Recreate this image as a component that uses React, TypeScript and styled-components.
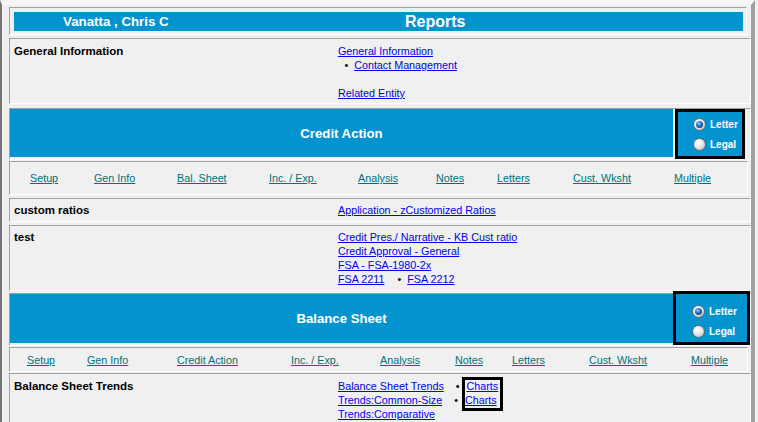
import React from "react";
import styled, { createGlobalStyle, css } from "styled-components";

const Global = createGlobalStyle`
  html, body { margin: 0; padding: 0; background: #f0f0f0; }
  body { font-family: "Liberation Sans", Arial, sans-serif; }
  #root { width: 758px; height: 422px; overflow: hidden; }
`;

const Frame = styled.div`
  box-sizing: border-box;
  width: 755px;
  height: 422px;
  overflow: hidden;
  border-left: 2px solid #747474;
  border-right: 4px solid #a0a0a0;
  border-top: 5px solid #f6f6f6;
  padding: 2px 0 0 7px;
`;

const boxBorder = css`
  border: 1px solid;
  border-color: #a0a0a0 #ffffff #ffffff #a0a0a0;
`;

const HeaderBox = styled.div`
  ${boxBorder};
  margin-right: 4px;
  padding: 4px 3px 3px 4px;
`;

const HeaderBar = styled.div`
  display: grid;
  grid-template-columns: 391px 1fr;
  align-items: center;
  height: 19px;
  background: #0394cf;
  color: #fff;
  font-weight: bold;
`;

const Name = styled.div`
  padding-left: 49px;
  font-size: 13.3px;
  line-height: 19px;
`;

const Title = styled.div`
  font-size: 16px;
  line-height: 19px;
`;

const Row = styled.div<{ $mt: number; $pt: number; $pb: number }>`
  ${boxBorder};
  position: relative;
  margin-top: ${(p) => p.$mt}px;
  padding: ${(p) => p.$pt}px 0 ${(p) => p.$pb}px 4px;
  display: grid;
  grid-template-columns: 324px 1fr;
  font-size: 10.75px;
  line-height: 14px;
`;

const Label = styled.div`
  font-weight: bold;
  font-size: 11.5px;
  color: #000;
`;

const Links = styled.div`
  position: relative;
  display: flex;
  flex-direction: column;
`;

const Line = styled.div<{ $indent?: number }>`
  height: 14px;
  white-space: nowrap;
  padding-left: ${(p) => p.$indent || 0}px;
  color: #000;
`;

const Link = styled.a`
  color: #0000f0;
  text-decoration: underline;
  cursor: pointer;
`;

const Bullet = styled.span<{ $l: number; $r: number }>`
  margin: 0 ${(p) => p.$r}px 0 ${(p) => p.$l}px;
  color: #000;
`;

const Section = styled.div<{ $mt: number }>`
  ${boxBorder};
  margin-top: ${(p) => p.$mt}px;
  display: flex;
  align-items: flex-start;
`;

const BlueTitle = styled.div<{ $h: number }>`
  width: 663px;
  height: ${(p) => p.$h}px;
  background: #0394cf;
  color: #fff;
  font-weight: bold;
  font-size: 13.2px;
  display: flex;
  align-items: center;
  justify-content: center;
`;

const RadioCell = styled.div<{ $w: number; $h: number; $ml: number; $mt: number; $pt: number; $pl: number }>`
  box-sizing: border-box;
  position: relative;
  width: ${(p) => p.$w}px;
  height: ${(p) => p.$h}px;
  margin-left: ${(p) => p.$ml}px;
  margin-top: ${(p) => p.$mt}px;
  padding: ${(p) => p.$pt}px 0 0 ${(p) => p.$pl}px;
  border: 3px solid #000;
  background: #0394cf;
  display: flex;
  flex-direction: column;
`;

const RadioRow = styled.label`
  display: flex;
  align-items: center;
  gap: 4px;
  height: 20px;
  color: #fff;
  font-weight: bold;
  font-size: 10px;
`;

const Radio = styled.span<{ $on?: boolean }>`
  position: relative;
  box-sizing: border-box;
  flex: none;
  width: 13px;
  height: 13px;
  border-radius: 50%;
  border: 1px solid #5f6f7c;
  background: radial-gradient(circle at 38% 32%, #ffffff 0%, #ececec 40%, #b0b0b0 100%);
  ${(p) =>
    p.$on &&
    css`
      &::after {
        content: "";
        position: absolute;
        left: 2px;
        top: 2px;
        width: 7px;
        height: 7px;
        border-radius: 50%;
        background: radial-gradient(circle at 40% 35%, #8fd2ff 0%, #1f6db8 45%, #082c55 100%);
      }
    `}
`;

const NavBox = styled.div<{ $mt: number; $pt: number; $pb: number; $pl: number; $cols: string }>`
  ${boxBorder};
  margin-top: ${(p) => p.$mt}px;
  margin-right: 3px;
  padding: ${(p) => p.$pt}px 0 ${(p) => p.$pb}px ${(p) => p.$pl}px;
  display: grid;
  grid-template-columns: ${(p) => p.$cols};
  font-size: 10.75px;
  line-height: 14px;
  white-space: nowrap;
`;

const NavLink = styled.a`
  color: #00707a;
  text-decoration: underline;
  cursor: pointer;
`;

const Highlight = styled.div`
  position: absolute;
  left: 124px;
  top: -2px;
  width: 41px;
  height: 34px;
  box-sizing: border-box;
  border: 3px solid #000;
  pointer-events: none;
`;

const PaperChoice: React.FC<{ w: number; h: number; ml: number; mt: number; pt: number; pl: number }> = ({ w, h, ml, mt, pt, pl }) => (
  <RadioCell $w={w} $h={h} $ml={ml} $mt={mt} $pt={pt} $pl={pl}>
    <RadioRow>
      <Radio $on />
      Letter
    </RadioRow>
    <RadioRow>
      <Radio />
      Legal
    </RadioRow>
  </RadioCell>
);

const nav1 = ["Setup", "Gen Info", "Bal. Sheet", "Inc. / Exp.", "Analysis", "Notes", "Letters", "Cust. Wksht", "Multiple"];
const nav2 = ["Setup", "Gen Info", "Credit Action", "Inc. / Exp.", "Analysis", "Notes", "Letters", "Cust. Wksht", "Multiple"];

export default function App() {
  return (
    <>
      <Global />
      <Frame>
        <HeaderBox>
          <HeaderBar>
            <Name>Vanatta , Chris C</Name>
            <Title>Reports</Title>
          </HeaderBar>
        </HeaderBox>

        <Row $mt={3} $pt={5} $pb={3}>
          <Label>General Information</Label>
          <Links>
            <Line>
              <Link>General Information</Link>
            </Line>
            <Line $indent={6.4}>
              <Bullet $l={0} $r={6}>•</Bullet>
              <Link>Contact Management</Link>
            </Line>
            <Line />
            <Line>
              <Link>Related Entity</Link>
            </Line>
          </Links>
        </Row>

        <Section $mt={4}>
          <BlueTitle $h={48}>Credit Action</BlueTitle>
          <PaperChoice w={70} h={50} ml={2} mt={0} pt={2} pl={15} />
        </Section>

        <NavBox $mt={1} $pt={9} $pb={9} $pl={20} $cols="64px 83px 92px 89px 78px 61px 76px 101px auto">
          {nav1.map((n) => (
            <div key={n}>
              <NavLink>{n}</NavLink>
            </div>
          ))}
        </NavBox>

        <Row $mt={3} $pt={4} $pb={4}>
          <Label>custom ratios</Label>
          <Links>
            <Line>
              <Link>Application - zCustomized Ratios</Link>
            </Line>
          </Links>
        </Row>

        <Row $mt={3} $pt={4} $pb={4}>
          <Label>test</Label>
          <Links>
            <Line>
              <Link>Credit Pres./ Narrative - KB Cust ratio</Link>
            </Line>
            <Line>
              <Link>Credit Approval - General</Link>
            </Line>
            <Line>
              <Link>FSA - FSA-1980-2x</Link>
            </Line>
            <Line>
              <Link>FSA 2211</Link>
              <Bullet $l={13} $r={6}>•</Bullet>
              <Link>FSA 2212</Link>
            </Line>
          </Links>
        </Row>

        <Section $mt={2}>
          <BlueTitle $h={49}>Balance Sheet</BlueTitle>
          <PaperChoice w={77} h={54} ml={0} mt={-3} pt={7} pl={16} />
        </Section>

        <NavBox $mt={1} $pt={5} $pb={4} $pl={17} $cols="60px 90px 114px 89px 75px 57px 77px 102px auto">
          {nav2.map((n) => (
            <div key={n}>
              <NavLink>{n}</NavLink>
            </div>
          ))}
        </NavBox>

        <Row $mt={1} $pt={5} $pb={4}>
          <Label>Balance Sheet Trends</Label>
          <Links>
            <Line>
              <Link>Balance Sheet Trends</Link>
              <Bullet $l={12} $r={7}>•</Bullet>
              <Link>Charts</Link>
            </Line>
            <Line>
              <Link>Trends:Common-Size</Link>
              <Bullet $l={12} $r={7}>•</Bullet>
              <Link>Charts</Link>
            </Line>
            <Line>
              <Link>Trends:Comparative</Link>
            </Line>
            <Highlight />
          </Links>
        </Row>
      </Frame>
    </>
  );
}
